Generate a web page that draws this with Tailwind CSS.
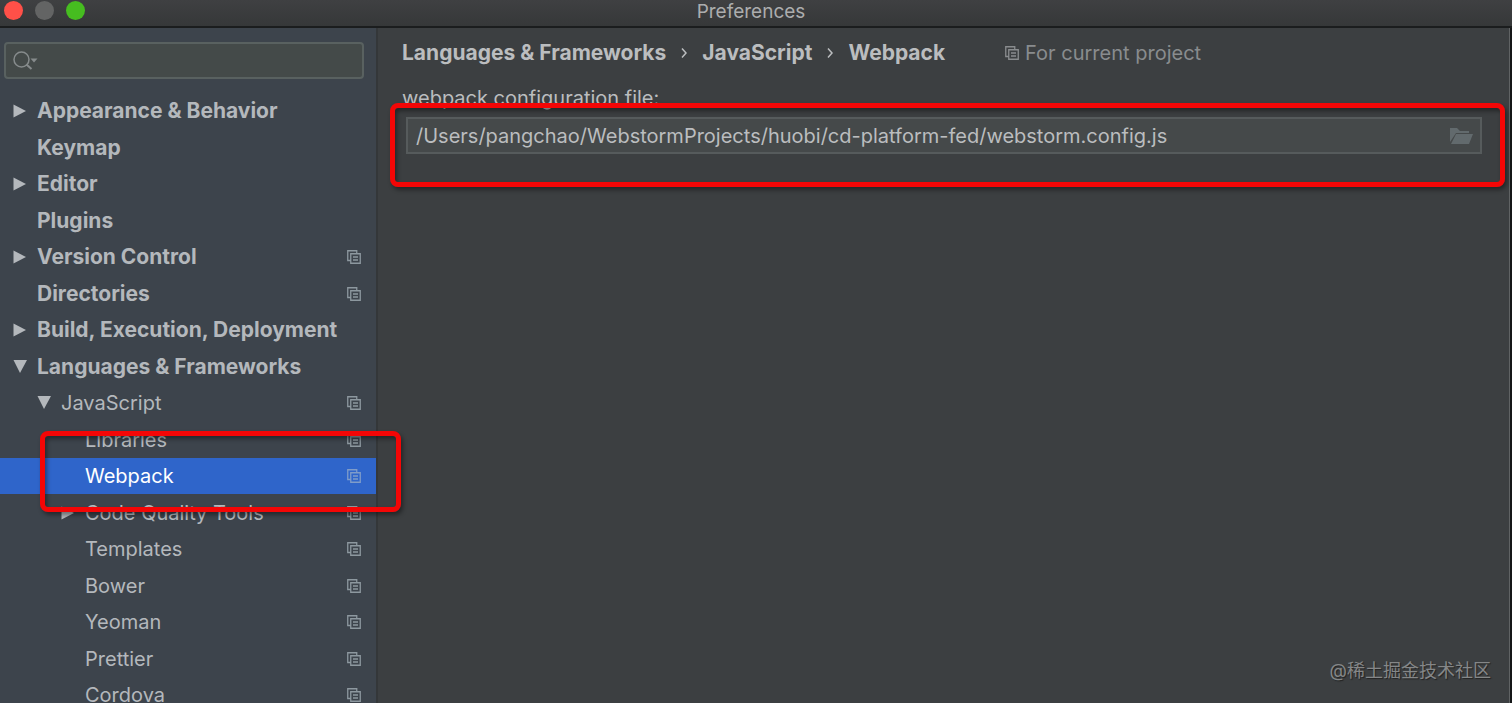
<!DOCTYPE html>
<html lang="en">
<head>
    <meta charset="UTF-8">
    <meta name="viewport" content="width=device-width, initial-scale=1.0">
    <title>Preferences</title>
    <script src="https://cdn.jsdelivr.net/npm/@tailwindcss/browser@4"></script>
</head>
<body class="h-screen overflow-hidden bg-[#3c3f41] font-['Inter','Noto_Sans_CJK_SC',sans-serif] text-xl text-[#bbbdbf]">
    <!-- Shared icons -->
    <svg class="hidden">
        <symbol id="project" viewBox="0 0 14 14">
            <path d="M3.5 10.5H.75V.75h9v2.5M3.75 3.75h9.5v9.5h-9.5zM6 7h5M6 10h5" fill="none" stroke="currentColor" stroke-width="1.3"/>
        </symbol>
        <symbol id="right" viewBox="0 0 14 14"><path d="M.5.5v13l12.500-6.500z" fill="currentColor"/></symbol>
        <symbol id="down" viewBox="0 0 14 14"><path d="M.5 0h13.500L7 13z" fill="currentColor"/></symbol>
    </svg>

    <div class="flex h-full flex-col">
        <!-- Title bar -->
        <header class="relative flex h-7 shrink-0 items-start justify-center border-b-2 border-[#1b1d1e] bg-linear-to-b from-[#3f4042] to-[#363839]">
            <div class="absolute top-px left-1 flex gap-3">
                <button class="size-[19px] rounded-full bg-[#ff5048]" aria-label="Close"></button>
                <button class="size-[19px] rounded-full bg-[#636464]" aria-label="Minimize"></button>
                <button class="size-[19px] rounded-full bg-[#46bd20]" aria-label="Zoom"></button>
            </div>
            <h1 class="pr-[10px] text-[19px] leading-6 text-[#acadae]">Preferences</h1>
        </header>

        <div class="flex min-h-0 flex-1">
            <!-- Sidebar -->
            <aside class="relative z-10 h-full w-[378px] shrink-0 border-r-2 border-[#343739] bg-[#3d444c]">
                <div class="relative mt-[14px] mr-3 ml-1">
                    <svg class="absolute top-2 left-2 h-5 w-7 text-[#868b8c]" viewBox="0 0 28 20" fill="none" stroke="currentColor" stroke-width="1.5">
                        <circle cx="9.500" cy="9.500" r="7.500"/>
                        <path d="M14.500 14.500l5 4.500" stroke-width="2"/>
                        <path d="M18.500 8.500h7l-3.500 4z" fill="currentColor" stroke="none"/>
                    </svg>
                    <input type="search" aria-label="Search settings" class="block h-[37px] w-full rounded-sm border-2 border-[#596160] bg-[#444a49] pl-10 outline-none">
                </div>

                <ul class="mt-[14px] text-[#b4b8bc] [&>li]:h-9 [&>li]:odd:mb-px [&_button]:flex [&_button]:size-full [&_button]:items-center [&_button]:pr-[15px] [&_button]:text-left">
                    <li><button class="pl-[13px] text-[21px] font-bold"><svg class="mr-[10px] size-[14px]"><use href="#right"/></svg>Appearance &amp; Behavior</button></li>
                    <li><button class="pl-[37px] text-[21px] font-bold">Keymap</button></li>
                    <li><button class="pl-[13px] text-[21px] font-bold"><svg class="mr-[10px] size-[14px]"><use href="#right"/></svg>Editor</button></li>
                    <li><button class="pl-[37px] text-[21px] font-bold">Plugins</button></li>
                    <li><button class="pl-[13px] text-[21px] font-bold"><svg class="mr-[10px] size-[14px]"><use href="#right"/></svg>Version Control<svg class="ml-auto size-[14px] text-[#8d989f]"><use href="#project"/></svg></button></li>
                    <li><button class="pl-[37px] text-[21px] font-bold">Directories<svg class="ml-auto size-[14px] text-[#8d989f]"><use href="#project"/></svg></button></li>
                    <li><button class="pl-[13px] text-[21px] font-bold"><svg class="mr-[10px] size-[14px]"><use href="#right"/></svg>Build, Execution, Deployment</button></li>
                    <li><button class="pl-[13px] text-[21px] font-bold"><svg class="mr-[10px] size-[14px]"><use href="#down"/></svg>Languages &amp; Frameworks</button></li>
                    <li><button class="pl-[37px]"><svg class="mr-[10px] size-[14px]"><use href="#down"/></svg>JavaScript<svg class="ml-auto size-[14px] text-[#8d989f]"><use href="#project"/></svg></button></li>
                    <li><button class="pl-[85px]">Libraries<svg class="ml-auto size-[14px] text-[#8d989f]"><use href="#project"/></svg></button></li>
                    <li class="relative bg-[#2f65ca] text-white">
                        <button class="pl-[85px]">Webpack<svg class="ml-auto size-[14px] text-[#7f9cc9]"><use href="#project"/></svg></button>
                        <div class="pointer-events-none absolute -top-[27px] -right-[25px] -bottom-[18px] left-10 rounded-lg border-5 border-[#f40606] shadow-[2px_3px_4px_#0006,inset_2px_3px_4px_#0006]"></div>
                    </li>
                    <li><button class="pl-[61px]"><svg class="mr-[10px] size-[14px]"><use href="#right"/></svg>Code Quality Tools<svg class="ml-auto size-[14px] text-[#8d989f]"><use href="#project"/></svg></button></li>
                    <li><button class="pl-[85px]">Templates<svg class="ml-auto size-[14px] text-[#8d989f]"><use href="#project"/></svg></button></li>
                    <li><button class="pl-[85px]">Bower<svg class="ml-auto size-[14px] text-[#8d989f]"><use href="#project"/></svg></button></li>
                    <li><button class="pl-[85px]">Yeoman<svg class="ml-auto size-[14px] text-[#8d989f]"><use href="#project"/></svg></button></li>
                    <li><button class="pl-[85px]">Prettier<svg class="ml-auto size-[14px] text-[#8d989f]"><use href="#project"/></svg></button></li>
                    <li><button class="pl-[85px]">Cordova<svg class="ml-auto size-[14px] text-[#8d989f]"><use href="#project"/></svg></button></li>
                </ul>
            </aside>

            <!-- Settings page -->
            <main class="relative min-w-0 flex-1 border-r border-[#606364] pt-[11px] pl-6">
                <nav class="flex h-7 items-center text-[21px] font-bold" aria-label="Breadcrumb">
                    <a href="#">Languages &amp; Frameworks</a>
                    <svg class="mx-4 h-3 w-1 overflow-visible" viewBox="0 0 4 12" fill="none" stroke="currentColor" stroke-width="1.5"><path d="M0 1.500 4 6 0 10.500"/></svg>
                    <a href="#">JavaScript</a>
                    <svg class="mx-4 h-3 w-1 overflow-visible" viewBox="0 0 4 12" fill="none" stroke="currentColor" stroke-width="1.5"><path d="M0 1.500 4 6 0 10.500"/></svg>
                    <a href="#">Webpack</a>
                    <span class="ml-[60px] flex items-center gap-[6px] text-xl font-normal text-[#898c8e]">
                        <svg class="size-[14px]"><use href="#project"/></svg>For current project
                    </span>
                </nav>

                <label for="config" class="mt-[17px] block leading-7">webpack configuration file:</label>
                <div class="relative mt-[5px] mr-[27px] ml-1">
                    <input id="config" type="text" value="/Users/pangchao/WebstormProjects/huobi/cd-platform-fed/webstorm.config.js" class="block h-[37px] w-full border-2 border-[#565b5c] bg-[#45494a] pr-12 pl-2 outline-none">
                    <button class="absolute top-2 right-2 text-[#626a6d]" aria-label="Browse">
                        <svg class="h-5 w-6" viewBox="0 0 24 20" fill="currentColor"><path d="M0 3h7l3 3h9v2H6L0 17zM6 9h17l-4 10H1z"/></svg>
                    </button>
                    <div class="pointer-events-none absolute -top-[14px] -right-[23px] -bottom-[33px] -left-4 rounded-lg border-5 border-[#f40606] shadow-[2px_3px_4px_#0006,inset_2px_3px_4px_#0006]"></div>
                </div>
                <p class="absolute right-[18px] bottom-4 text-lg leading-8 text-[#858788] [text-shadow:1px_1px_1px_#222]">@稀土掘金技术社区</p>
            </main>
            <div class="w-[2px] bg-[#151718]"></div>
        </div>
    </div>
</body>
</html>
